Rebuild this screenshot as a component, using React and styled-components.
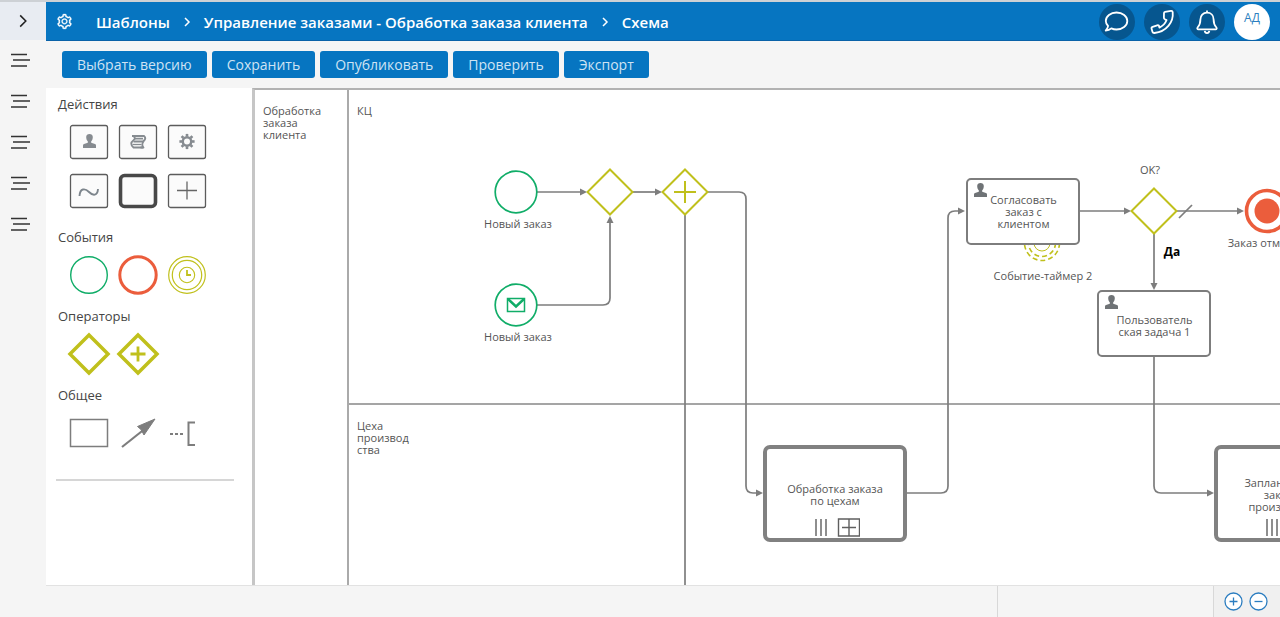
import React from "react";
import styled, { createGlobalStyle } from "styled-components";
import { AiOutlineSetting } from "react-icons/ai";

const GlobalStyle = createGlobalStyle`
  * {
    box-sizing: border-box;
  }
  body {
    margin: 0;
    font-family: "Open Sans", "Noto Sans", sans-serif;
    color: #454545;
    background: #f5f5f5;
  }
  button {
    font-family: inherit;
    padding: 0;
    border: none;
    background: none;
    cursor: pointer;
  }
  svg {
    display: block;
    flex-shrink: 0;
  }
`;

const Page = styled.div`
  display: flex;
  height: 100vh;
  overflow: hidden;
  border-top: 2px solid #cdd1d5;
`;

const Sidebar = styled.nav`
  width: 46px;
  flex-shrink: 0;
  display: flex;
  flex-direction: column;
  background: #f5f5f5;
`;

const SidebarButton = styled.button`
  height: 41px;
  display: flex;
  align-items: center;
  justify-content: center;
  padding-right: 6px;
  color: #333;
`;

const SidebarToggle = styled(SidebarButton)`
  height: 38px;
  padding: 0;
  background: #e8ecf2;
  color: #222;
`;

const Main = styled.div`
  flex: 1;
  min-width: 0;
  display: flex;
  flex-direction: column;
`;

const Header = styled.header`
  height: 39px;
  flex-shrink: 0;
  display: flex;
  align-items: center;
  padding: 1px 10px 0 10px;
  background: #0675c1;
  border-bottom: 1px solid #0a62a8;
  color: #fff;
`;

const SettingsButton = styled.button`
  display: flex;
  color: #fff;
  font-size: 17px;
`;

const Breadcrumbs = styled.nav`
  flex: 1;
  display: flex;
  align-items: center;
  gap: 12px;
  margin-left: 23px;
  white-space: nowrap;
`;

const Crumb = styled.a`
  color: #fff;
  font-size: 15px;
  line-height: 24px;
  font-weight: 600;
  text-decoration: none;
`;

const HeaderActions = styled.div`
  display: flex;
  align-items: center;
  gap: 9px;
`;

const RoundButton = styled.button`
  width: 36px;
  height: 36px;
  display: flex;
  align-items: center;
  justify-content: center;
  border-radius: 50%;
  background: #06568f;
  color: #fff;
`;

const Avatar = styled(RoundButton)`
  align-items: flex-start;
  padding-top: 6px;
  background: #fff;
  color: #2d7fc0;
  font-size: 12px;
  line-height: 16px;
`;

const Toolbar = styled.div`
  height: 47px;
  flex-shrink: 0;
  display: flex;
  align-items: center;
  gap: 5px;
  padding: 0 16px;
`;

const ToolbarButton = styled.button`
  height: 27px;
  padding: 0 15px;
  border-radius: 3px;
  background: #0675c1;
  color: #cfe3f3;
  font-size: 14px;
  line-height: 20px;
  white-space: nowrap;
`;

const Workspace = styled.div`
  flex: 1;
  min-height: 0;
  display: flex;
  background: #fff;
`;

const Palette = styled.aside`
  width: 206px;
  flex-shrink: 0;
  padding: 4px 12px 0;
`;

const PaletteSection = styled.section`
  margin-bottom: ${({ $wide }) => ($wide ? "10px" : "5px")};
`;

const PaletteTitle = styled.h2`
  margin: 0;
  font-size: 13px;
  line-height: 25px;
  font-weight: 400;
`;

const PaletteGrid = styled.div`
  display: grid;
  grid-template-columns: repeat(3, 49px);
  grid-auto-rows: 49px;
  margin-left: 6px;
`;

const PaletteItem = styled.button`
  display: flex;
  align-items: center;
  justify-content: center;
`;

const PaletteDivider = styled.hr`
  margin: 22px 6px 0 -2px;
  border: none;
  border-top: 2px solid #d6d6d6;
`;

const Canvas = styled.main`
  position: relative;
  flex: 1;
  min-width: 0;
  overflow: hidden;
`;

const Pool = styled.div`
  height: 100%;
  display: flex;
  border-left: 3px solid #c6c6c6;
  border-top: 2px solid #b2b2b2;
`;

const LaneText = styled.div`
  padding: 15px 8px;
  font-size: 11px;
  line-height: 12px;
  color: #555;
`;

const PoolName = styled(LaneText)`
  width: 92px;
  flex-shrink: 0;
`;

const Lanes = styled.div`
  flex: 1;
  display: flex;
  flex-direction: column;
  border-left: 2px solid #aaa;
`;

const Lane = styled(LaneText)`
  height: ${({ $height }) => $height}px;
  flex-shrink: 0;
  border-bottom: 2px solid #a5a5a5;
`;

const Connectors = styled.svg`
  position: absolute;
  left: 0;
  top: 0;
  width: 100%;
  height: 100%;
`;

const Task = styled.div`
  position: absolute;
  left: ${({ $x }) => $x}px;
  top: ${({ $y }) => $y}px;
  width: 114px;
  height: 67px;
  padding: 3px 0 0 6px;
  border: 2px solid #7d7d7d;
  border-radius: 5px;
  background: #fff;
`;

const TaskText = styled.div`
  font-size: 11px;
  line-height: 12px;
  text-align: center;
  white-space: pre-line;
  color: #555;
`;

const UserTaskText = styled(TaskText)`
  margin-top: ${({ $lines }) => ($lines === 2 ? "4px" : "-4px")};
  padding-right: 5px;
`;

const SubProcess = styled.div`
  position: absolute;
  left: ${({ $x }) => $x}px;
  top: ${({ $y }) => $y}px;
  width: 144px;
  height: 97px;
  display: flex;
  flex-direction: column;
  align-items: center;
  justify-content: flex-end;
  gap: 4px;
  border: 4px solid #818181;
  border-radius: 7px;
  background: #fff;
`;

const SubProcessText = styled(TaskText)`
  height: 38px;
  display: flex;
  align-items: center;
`;

const Label = styled.div`
  position: absolute;
  left: ${({ $x }) => $x}px;
  top: ${({ $y }) => $y}px;
  transform: translate(-50%, -50%);
  font-size: ${({ $strong }) => ($strong ? "12px" : "11px")};
  line-height: 16px;
  font-weight: ${({ $strong }) => ($strong ? 700 : 400)};
  color: ${({ $strong }) => ($strong ? "#000" : "#555")};
  white-space: nowrap;
`;

const Footer = styled.footer`
  height: 32px;
  flex-shrink: 0;
  display: flex;
  justify-content: flex-end;
  border-top: 1px solid #e2e2e2;
`;

const FooterPane = styled.div`
  width: 216px;
  border-left: 1px solid #d8d8d8;
`;

const ZoomPane = styled.div`
  width: 67px;
  display: flex;
  align-items: center;
  justify-content: center;
  gap: 6px;
  padding-right: 2px;
  background: #f0f0f0;
  border-left: 1px solid #d8d8d8;
`;

const ZoomButton = styled.button`
  display: flex;
  color: #2b7dc0;
`;

const GREEN = "#10ad68";
const RED = "#eb5d3c";
const OLIVE = "#c0c01c";
const GREY = "#7d7d7d";

const MenuIcon = () => (
  <svg width="20" height="16" viewBox="0 0 20 16" stroke="currentColor" strokeWidth="1.4">
    <path d="M1 1.500h16M3 7h17M1 13h16" />
  </svg>
);

const Chevron = ({ size = 10, weight = 1.5 }) => (
  <svg width={size} height={size} viewBox="0 0 10 10" fill="none" stroke="currentColor" strokeWidth={weight}>
    <path d="M3 1l4 4-4 4" />
  </svg>
);

const HeaderIcon = ({ children }) => (
  <svg width="26" height="26" viewBox="0 0 26 26" fill="none" stroke="currentColor" strokeWidth="1.800" strokeLinejoin="round">
    {children}
  </svg>
);

const CommentIcon = () => (
  <HeaderIcon>
    <path d="M12.500 3.500C18.500 3.500 23.300 7.300 23.300 12s-4.800 8.500-10.800 8.500c-1.900 0-3.600-.4-5.200-1.100-1.500 1.300-3.300 2-5.600 2.100 1.300-1.400 2.300-3 2.400-4.500C2.700 15.600 1.800 13.900 1.800 12c0-4.700 4.800-8.500 10.700-8.500z" />
  </HeaderIcon>
);

const PhoneIcon = () => (
  <HeaderIcon>
    <path d="M16 2.800l6-.9c1-.1 1.600.3 1.700 1.300.5 5-.9 9.700-4.100 13.500-3.400 4.100-7.900 6.700-14.100 7.300-1 .1-1.700-.2-2-1.100l-.9-3.100c-.3-1 .1-1.700 1-2l4.600-1.500c1-.3 1.700.1 1.900 1l.3 1.300c3.200-1.500 5.900-4.200 7.200-7.600l-1.700-.7c-.8-.4-1.100-.9-1-1.800l.1-4.500c0-.7.300-1.100 1-1.200z" />
  </HeaderIcon>
);

const BellIcon = () => (
  <HeaderIcon>
    <path d="M13 1.500v2.200M13 3.700c4 0 6.600 2.900 6.600 6.800 0 4.800 1.100 6.200 2.800 8 .7.800.3 1.900-.8 1.900H4.400c-1.100 0-1.500-1.100-.8-1.900 1.700-1.800 2.800-3.200 2.800-8 0-3.900 2.600-6.800 6.600-6.800z" />
    <path d="M10.700 21.900c.2 1.400 1.100 2.200 2.300 2.200s2.100-.8 2.300-2.200" />
  </HeaderIcon>
);

const UserShape = () => (
  <path d="M3.200 3C3.200 1 4.500 0 6.500 0s3.300 1 3.300 3c0 2-.5 3.200-1.600 4.200v1.600l3.800 1.200c.7.300 1 .8 1 1.500V14H0v-2.500c0-.7.300-1.200 1-1.500l3.800-1.200V7.200C3.700 6.200 3.200 5 3.200 3z" />
);

const UserIcon = () => (
  <svg width="13" height="15" viewBox="0 0 13 15" fill="#6f7376">
    <UserShape />
  </svg>
);

const Frame = ({ children, bold }) => (
  <svg width="40" height="36" viewBox="0 0 40 36" fill="none">
    <rect
      x={bold ? 2.5 : 1.5}
      y={bold ? 2.5 : 1.5}
      width={bold ? 35 : 37}
      height={bold ? 31 : 33}
      rx={bold ? 4 : 2}
      fill="#fbfbfb"
      stroke={bold ? "#484848" : "#5c5c5c"}
      strokeWidth={bold ? 3.6 : 1.3}
    />
    {children}
  </svg>
);

const Gear = () => (
  <g transform="translate(20 17.500)" stroke="#868b90">
    <circle r="4.200" strokeWidth="2.400" />
    {[0, 45, 90, 135, 180, 225, 270, 315].map((angle) => (
      <path key={angle} d="M0-5v-2.600" strokeWidth="2.600" transform={`rotate(${angle})`} />
    ))}
  </g>
);

const Script = () => (
  <g stroke="#868b90" strokeWidth="1.800" strokeLinejoin="round">
    <path d="M14 12h12c2 1.600 1.500 3.600-.8 5.200" strokeWidth="2" />
    <path d="M15 12c2.500 1.300 2.300 2.600.5 4.200-3 2.200-3 4.900 0 7.300h9.500" />
    <path d="M17 14.700h8M15.500 17.500h10c-1.600 2.200-1.800 4 0 6h-3" />
    <path d="M14.500 20.500h9" strokeWidth="1.300" />
  </g>
);

const ClockIcon = () => (
  <svg width="40" height="40" viewBox="-20 -20 40 40" fill="none" stroke={OLIVE}>
    <circle r="18.300" strokeWidth="1.200" />
    <circle r="14.700" strokeWidth="1.200" />
    <circle r="7.700" strokeWidth="1.100" />
    <path d="M0-5v5h4" strokeWidth="1.800" />
  </svg>
);

const sections = [
  {
    title: "Действия",
    wide: true,
    items: [
      {
        name: "Пользовательская задача",
        icon: (
          <Frame>
            <g transform="translate(14 10)" fill="#868b90">
              <UserShape />
            </g>
          </Frame>
        ),
      },
      { name: "Сценарий", icon: <Frame><Script /></Frame> },
      { name: "Сервисная задача", icon: <Frame><Gear /></Frame> },
      {
        name: "Выражение",
        icon: (
          <Frame>
            <path d="M10.500 23c.5-8 5.500-8 9.500-4s8.500 4 9-3" stroke="#7d858c" strokeWidth="1.900" />
          </Frame>
        ),
      },
      { name: "Вызов процесса", icon: <Frame bold /> },
      {
        name: "Подпроцесс",
        icon: (
          <Frame>
            <path d="M10 17.500h20M20 8.500v18" stroke="#666" strokeWidth="1.300" />
          </Frame>
        ),
      },
    ],
  },
  {
    title: "События",
    items: [
      {
        name: "Начало",
        icon: (
          <svg width="40" height="40" viewBox="-20 -20 40 40" fill="none">
            <circle r="18.300" stroke={GREEN} strokeWidth="1.400" />
          </svg>
        ),
      },
      {
        name: "Завершение",
        icon: (
          <svg width="40" height="40" viewBox="-20 -20 40 40" fill="none">
            <circle r="18.200" stroke={RED} strokeWidth="3" />
          </svg>
        ),
      },
      { name: "Таймер", icon: <ClockIcon /> },
    ],
  },
  {
    title: "Операторы",
    items: [
      {
        name: "Исключающий",
        icon: (
          <svg width="44" height="44" viewBox="-22 -22 44 44" fill="none" stroke={OLIVE} strokeWidth="3.500">
            <path d="M0-19L19 0 0 19-19 0z" />
          </svg>
        ),
      },
      {
        name: "Параллельный",
        icon: (
          <svg width="44" height="44" viewBox="-22 -22 44 44" fill="none" stroke={OLIVE} strokeWidth="3.500">
            <path d="M0-19L19 0 0 19-19 0z" />
            <path d="M-7.500 0h15M0-7.500v15" strokeWidth="2.800" />
          </svg>
        ),
      },
    ],
  },
  {
    title: "Общее",
    items: [
      {
        name: "Область",
        icon: (
          <svg width="40" height="30" viewBox="0 0 40 30" fill="none" stroke={GREY} strokeWidth="1.500">
            <path d="M1.500 1.500h37v27h-37z" />
          </svg>
        ),
      },
      {
        name: "Поток",
        icon: (
          <svg width="36" height="30" viewBox="0 0 36 30" fill={GREY} stroke={GREY}>
            <path d="M2 29L24 11.500" strokeWidth="2.200" />
            <path d="M35 1L17.500 8.500l3.500 3 3 5.500z" strokeWidth="1" />
          </svg>
        ),
      },
      {
        name: "Аннотация",
        icon: (
          <svg width="38" height="28" viewBox="0 0 38 28" fill="none" stroke={GREY} strokeWidth="2">
            <path d="M2 15h3M7 15h3M12 15h3" />
            <path d="M27 3.500h-6.500V26H27" />
          </svg>
        ),
      },
    ],
  },
];

const labels = [
  { text: "Новый заказ", x: 266, y: 136 },
  { text: "Новый заказ", x: 266, y: 249 },
  { text: "Событие-таймер 2", x: 791, y: 188 },
  { text: "OK?", x: 898, y: 82 },
  { text: "Заказ отменен", x: 1015, y: 155 },
  { text: "Да", x: 920, y: 164, strong: true },
];

const flows = [
  "M285 104H329",
  "M285 217H351q7 0 7-7V134",
  "M381 104H404",
  "M456 104H487q7 0 7 7V398q0 7 7 7H505",
  "M655 405H689q7 0 7-7V130q0-7 7-7H707",
  "M828 123H873",
  "M925 123H986",
  "M902 146V196",
  "M902 269V398q0 7 7 7H956",
];

const Gateway = ({ x, y, children }) => (
  <g transform={`translate(${x} ${y})`} stroke={OLIVE} strokeWidth="2">
    <path d="M0-22.500L22.500 0 0 22.500-22.500 0z" fill="#fff" />
    {children}
  </g>
);

const Markers = () => (
  <svg width="50" height="20" viewBox="-4 0 50 20" fill="none" stroke="#5f5f5f" strokeWidth="1.400">
    <path d="M2 1v17M7 1v17M12 1v17" />
    <path d="M24.500 1h21v17h-21zM35 1v17M28 9.500h14" />
  </svg>
);

function Diagram() {
  return (
    <Canvas>
      <Pool>
        <PoolName>Обработка заказа клиента</PoolName>
        <Lanes>
          <Lane $height={315}>КЦ</Lane>
          <LaneText>
            Цеха
            <br />
            производ
            <br />
            ства
          </LaneText>
        </Lanes>
      </Pool>

      <Connectors>
        <defs>
          <marker id="arrow" viewBox="0 0 8 8" refX="1" refY="4" markerWidth="8" markerHeight="8" markerUnits="userSpaceOnUse" orient="auto">
            <path d="M0 0.500l7 3.500-7 3.500z" fill={GREY} />
          </marker>
        </defs>
        <g fill="none" stroke={GREY} strokeWidth="1.700">
          <path d="M433 127V2000" />
          {flows.map((d) => (
            <path key={d} d={d} markerEnd="url(#arrow)" />
          ))}
          <path d="M927 130l13-13" />
        </g>
        <g fill="none" stroke={OLIVE} strokeWidth="1.600">
          <circle cx="790" cy="155" r="17.500" strokeDasharray="5 3" />
          <circle cx="790" cy="155" r="13.500" strokeDasharray="5 3" />
          <circle cx="790" cy="155" r="8" strokeWidth="1" />
        </g>
        <circle cx="264" cy="104" r="20.800" fill="#fff" stroke={GREEN} strokeWidth="1.700" />
        <circle cx="264" cy="217" r="20.800" fill="#fff" stroke={GREEN} strokeWidth="1.700" />
        <g fill="none" stroke={GREEN}>
          <path d="M255.500 210.500h17v13h-17z" strokeWidth="1.500" />
          <path d="M256 211l8 7.500 8-7.500" strokeWidth="2.400" />
        </g>
        <Gateway x={358} y={104} />
        <Gateway x={433} y={104}>
          <path d="M-11 0h22M0-11v22" />
        </Gateway>
        <Gateway x={902} y={123} />
        <circle cx="1015" cy="123" r="20.500" fill="#fff" stroke={RED} strokeWidth="3.600" />
        <circle cx="1015" cy="123" r="12.500" fill={RED} />
      </Connectors>

      <Task $x={714} $y={90}>
        <UserIcon />
        <UserTaskText $lines={3}>{"Согласовать\nзаказ с\nклиентом"}</UserTaskText>
      </Task>
      <Task $x={845} $y={202}>
        <UserIcon />
        <UserTaskText $lines={2}>{"Пользователь\nская задача 1"}</UserTaskText>
      </Task>
      <SubProcess $x={511} $y={357}>
        <SubProcessText>{"Обработка заказа\nпо цехам"}</SubProcessText>
        <Markers />
      </SubProcess>
      <SubProcess $x={962} $y={357}>
        <SubProcessText>{"Запланировать\nзаказ на\nпроизводство"}</SubProcessText>
        <Markers />
      </SubProcess>

      {labels.map(({ text, x, y, strong }) => (
        <Label key={`${x}-${y}`} $x={x} $y={y} $strong={strong}>
          {text}
        </Label>
      ))}
    </Canvas>
  );
}

function App() {
  return (
    <>
      <GlobalStyle />
      <Page>
        <Sidebar>
          <SidebarToggle aria-label="Развернуть меню">
            <Chevron size={14} weight={1.1} />
          </SidebarToggle>
          {["Задачи", "Процессы", "Документы", "Отчеты", "Справочники"].map((name) => (
            <SidebarButton key={name} aria-label={name}>
              <MenuIcon />
            </SidebarButton>
          ))}
        </Sidebar>
        <Main>
          <Header>
            <SettingsButton aria-label="Настройки">
              <AiOutlineSetting strokeWidth="20" />
            </SettingsButton>
            <Breadcrumbs>
              <Crumb href="#templates">Шаблоны</Crumb>
              <Chevron />
              <Crumb href="#process">Управление заказами - Обработка заказа клиента</Crumb>
              <Chevron />
              <Crumb href="#scheme">Схема</Crumb>
            </Breadcrumbs>
            <HeaderActions>
              <RoundButton aria-label="Сообщения">
                <CommentIcon />
              </RoundButton>
              <RoundButton aria-label="Звонки">
                <PhoneIcon />
              </RoundButton>
              <RoundButton aria-label="Уведомления">
                <BellIcon />
              </RoundButton>
              <Avatar>АД</Avatar>
            </HeaderActions>
          </Header>
          <Toolbar>
            <ToolbarButton>Выбрать версию</ToolbarButton>
            <ToolbarButton>Сохранить</ToolbarButton>
            <ToolbarButton>Опубликовать</ToolbarButton>
            <ToolbarButton>Проверить</ToolbarButton>
            <ToolbarButton>Экспорт</ToolbarButton>
          </Toolbar>
          <Workspace>
            <Palette>
              {sections.map(({ title, wide, items }) => (
                <PaletteSection key={title} $wide={wide}>
                  <PaletteTitle>{title}</PaletteTitle>
                  <PaletteGrid>
                    {items.map(({ name, icon }) => (
                      <PaletteItem key={name} aria-label={name}>
                        {icon}
                      </PaletteItem>
                    ))}
                  </PaletteGrid>
                </PaletteSection>
              ))}
              <PaletteDivider />
            </Palette>
            <Diagram />
          </Workspace>
          <Footer>
            <FooterPane />
            <ZoomPane>
              {["M9.500 5.500v8M5.500 9.500h8", "M5.500 9.500h8"].map((d, i) => (
                <ZoomButton key={d} aria-label={i ? "Уменьшить" : "Увеличить"}>
                  <svg width="19" height="19" viewBox="0 0 19 19" fill="#fff" stroke="currentColor" strokeWidth="1.300">
                    <circle cx="9.500" cy="9.500" r="8.500" />
                    <path d={d} />
                  </svg>
                </ZoomButton>
              ))}
            </ZoomPane>
          </Footer>
        </Main>
      </Page>
    </>
  );
}

export default App;
